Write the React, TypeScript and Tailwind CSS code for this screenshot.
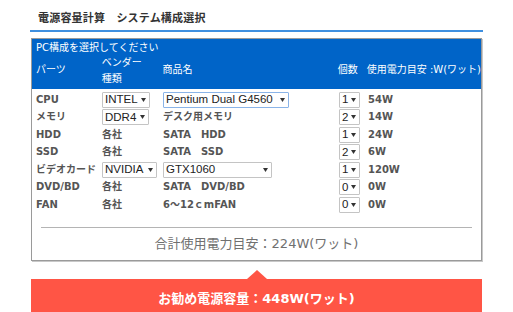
import React from 'react';

const JP = "font-['DejaVu_Sans','Noto_Sans_CJK_JP',sans-serif]";

type Row = {
  part: string;
  vendor: { select?: boolean; text: string; w?: string };
  product: { select?: boolean; text: string; w?: string; focus?: boolean };
  count: string;
  watt: string;
};

const ROWS: Row[] = [
  { part: 'CPU', vendor: { select: true, text: 'INTEL', w: 'w-[48px]' }, product: { select: true, text: 'Pentium Dual G4560', w: 'w-[126px]', focus: true }, count: '1', watt: '54W' },
  { part: 'メモリ', vendor: { select: true, text: 'DDR4', w: 'w-[47px]' }, product: { text: 'デスク用メモリ' }, count: '2', watt: '14W' },
  { part: 'HDD', vendor: { text: '各社' }, product: { text: 'SATA　HDD' }, count: '1', watt: '24W' },
  { part: 'SSD', vendor: { text: '各社' }, product: { text: 'SATA　SSD' }, count: '2', watt: '6W' },
  { part: 'ビデオカード', vendor: { select: true, text: 'NVIDIA', w: 'w-[55px]' }, product: { select: true, text: 'GTX1060', w: 'w-[109px]' }, count: '1', watt: '120W' },
  { part: 'DVD/BD', vendor: { text: '各社' }, product: { text: 'SATA　DVD/BD' }, count: '0', watt: '0W' },
  { part: 'FAN', vendor: { text: '各社' }, product: { text: '6～12ｃmFAN' }, count: '0', watt: '0W' },
];

function Arrow() {
  return (
    <svg width="5" height="4" viewBox="0 0 5 4" className="shrink-0">
      <polygon points="0,0 5,0 2.5,4" fill="#333" />
    </svg>
  );
}

function Select({ text, w, focus }: { text: string; w?: string; focus?: boolean }) {
  return (
    <div
      className={`${w} h-[16px] flex items-center justify-between pl-[2px] pr-[3px] bg-white border ${
        focus ? 'border-[#8ab4e8]' : 'border-[#c4c4c4]'
      } rounded-[1px] font-['Liberation_Sans',sans-serif] font-normal whitespace-nowrap text-[11.5px] text-[#222] leading-none`}
    >
      <span>{text}</span>
      <Arrow />
    </div>
  );
}

export default function App() {
  return (
    <div className={`w-[513px] h-[312px] overflow-hidden bg-white ${JP}`}>
      {/* title */}
      <div className="h-[30px] pl-[38px] pt-[13px] text-[11px] font-bold text-[#333] leading-none tracking-[0.2px]">
        電源容量計算　システム構成選択
      </div>
      <div className="mx-[30px] h-[2px] bg-[#3f8fdf]" />

      {/* table box */}
      <div className="mt-[6px] mx-[31px] border border-[#9a9a9a] shadow-[1px_1px_0_#c8c8c8]">
        <div className="h-[50px] bg-[#0064c8] text-white text-[10px] leading-none whitespace-nowrap">
          <div className="pl-[4px] pt-[4px]">PC構成を選択してください</div>
          <div className="flex items-center h-[34px] pl-[4px]">
            <div className="w-[66px]">パーツ</div>
            <div className="w-[61px] flex flex-col gap-[6px] pt-[2px]">
              <span>ベンダー</span>
              <span>種類</span>
            </div>
            <div className="w-[176px]">商品名</div>
            <div className="w-[29px]">個数</div>
            <div>使用電力目安 :W(ワット)</div>
          </div>
        </div>

        <div className="pt-[2px] pl-[4px] text-[10px] font-bold text-[#555] leading-none whitespace-nowrap">
          {ROWS.map((r) => (
            <div key={r.part} className="h-[17.5px] flex items-center">
              <div className="w-[66px]">{r.part}</div>
              <div className="w-[61px]">
                {r.vendor.select ? <Select text={r.vendor.text} w={r.vendor.w} /> : r.vendor.text}
              </div>
              <div className="w-[176px]">
                {r.product.select ? (
                  <Select text={r.product.text} w={r.product.w} focus={r.product.focus} />
                ) : (
                  r.product.text
                )}
              </div>
              <div className="w-[29px]">
                <Select text={r.count} w="w-[21px]" />
              </div>
              <div>{r.watt}</div>
            </div>
          ))}
        </div>

        <div className="mt-[13px] mx-[9px] h-px bg-[#b4b4b4]" />
        <div className="h-[32px] flex items-center justify-center text-[13px] text-[#707070]">
          合計使用電力目安：224W(ワット)
        </div>
      </div>

      {/* recommendation */}
      <div className="relative mt-[18px] mx-[31px] h-[40px] bg-[#ff5545] flex items-center justify-center text-white text-[13px] font-bold">
        <div className="absolute left-1/2 -translate-x-1/2 -top-[9px] w-0 h-0 border-l-[10px] border-r-[10px] border-b-[9px] border-l-transparent border-r-transparent border-b-[#ff5545]" />
        お勧め電源容量：448W(ワット)
      </div>
    </div>
  );
}
